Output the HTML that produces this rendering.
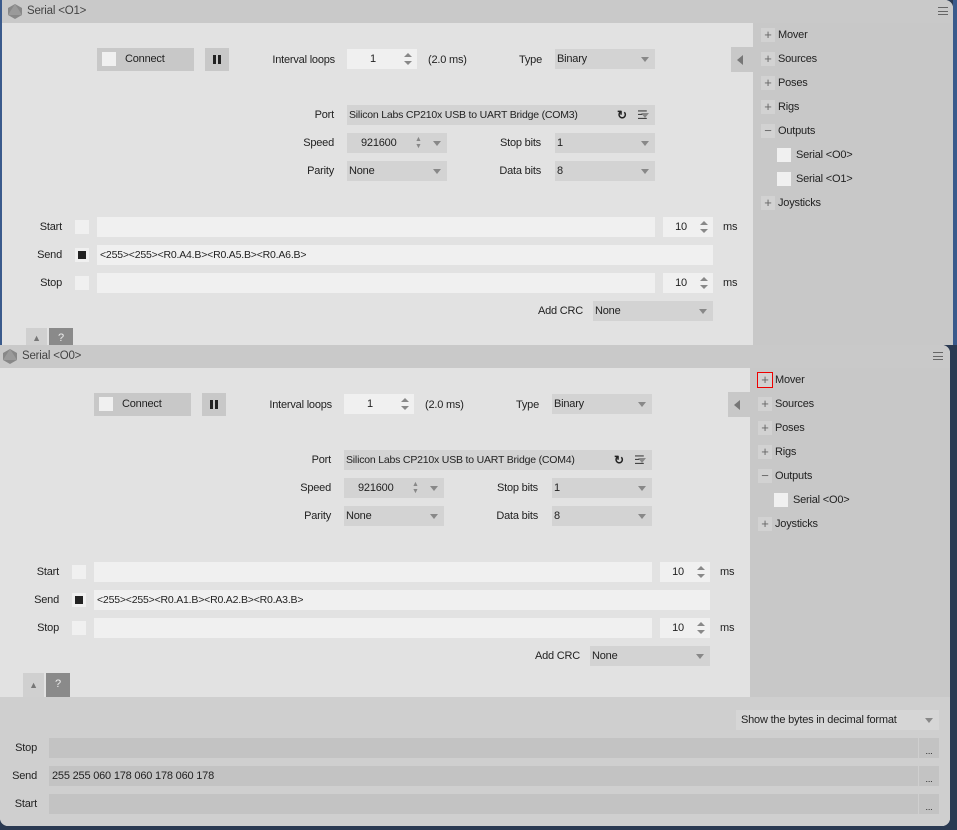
<!DOCTYPE html>
<html><head><meta charset="utf-8"><style>
*{margin:0;padding:0;box-sizing:border-box}
body{width:957px;height:830px;overflow:hidden;background:#2b3a52;font-family:"Liberation Sans",sans-serif;font-size:11px;letter-spacing:-0.2px;color:#222;position:relative}
.a{position:absolute;white-space:nowrap}
.panel{position:absolute;width:953px;background:#e2e2e2;border-radius:0 8px 0 0;overflow:hidden}
.tb{position:absolute;left:0;top:0;right:0;height:23px;background:#c9c9c9}
.tb .t{position:absolute;left:25px;top:5px;color:#444;font-size:11.5px}
.logo{position:absolute;left:5px;top:3px;width:16px;height:17px}
.ham{position:absolute;right:5px;top:7px;width:10px;height:8px;border-top:1px solid #666;border-bottom:1px solid #666}
.ham:after{content:"";position:absolute;left:0;right:0;top:3px;border-top:1px solid #666}
.side{position:absolute;top:23px;width:200px;bottom:0;background:#c8c8c8}
.lbl{position:absolute;text-align:right;line-height:20px;height:20px;white-space:nowrap}
.fld{position:absolute;height:20px;line-height:20px;background:#f0f0f0;padding-left:3px;white-space:nowrap;font-size:10.5px}
.cmb{position:absolute;height:20px;line-height:20px;background:#d3d3d3;padding-left:2px;white-space:nowrap}
.cmb:after{content:"";position:absolute;right:6px;top:8px;border:4px solid transparent;border-top:5px solid #888;border-bottom:0}
.cb{position:absolute;width:14px;height:14px;background:#f0f0f0}
.btn{position:absolute;background:#c8c8c8}
.spin{position:absolute;height:20px;line-height:20px;background:#f0f0f0;text-align:center}
.spin i{position:absolute;right:5px;top:4px;width:0;height:0;border:4px solid transparent;border-bottom:4px solid #888;border-top:0}
.spin b{position:absolute;right:5px;top:12px;width:0;height:0;border:4px solid transparent;border-top:4px solid #888;border-bottom:0}
.tr{position:absolute;height:20px;line-height:20px;white-space:nowrap}
.tr .pm{position:absolute;left:0;top:3px;width:14px;height:14px;background:#d2d2d2;color:#666;text-align:center;line-height:13px;font-size:13px}
.tr .tx{position:absolute;left:17px;top:0;white-space:nowrap}
</style></head><body>
<div class="a" style="left:953px;top:0;width:4px;height:345px;background:#3a5a8c"></div>

<div class="panel" style="left:0;top:0;height:345px;border-left:2px solid #3a5a8c">
<div class="tb"><svg class="logo" viewBox="0 0 16 17"><polygon points="8,1 15,5 15,12 8,16 1,12 1,5" fill="#888"/><polygon points="8,1 15,12 1,12" fill="#9a9a9a"/></svg><span class="t">Serial &lt;O1&gt;</span><div class="ham"></div></div>
<div class="side" style="left:751px"></div>
</div>
<div class="panel" style="left:0;top:345px;width:950px;height:481px;border-radius:0 8px 8px 8px">
<div class="tb"><svg class="logo" viewBox="0 0 16 17" style="left:2px"><polygon points="8,1 15,5 15,12 8,16 1,12 1,5" fill="#888"/><polygon points="8,1 15,12 1,12" fill="#9a9a9a"/></svg><span class="t" style="left:22px">Serial &lt;O0&gt;</span><div class="ham" style="right:7px"></div></div>
<div class="side" style="left:750px"></div>
<div class="a" style="left:0;top:352px;width:950px;height:129px;background:#cfcfcf"></div>
</div>

<div class="a" style="left:0;top:0">
<div class="btn" style="left:97px;top:48px;width:97px;height:23px"><div class="cb" style="left:5px;top:4px"></div><span class="a" style="left:28px;top:5px">Connect</span></div>
<div class="btn" style="left:205px;top:48px;width:24px;height:23px"><div class="a" style="left:8px;top:7px;width:3px;height:9px;background:#222"></div><div class="a" style="left:13px;top:7px;width:3px;height:9px;background:#222"></div></div>
<div class="lbl" style="left:235px;top:50px;width:100px">Interval loops</div>
<div class="spin" style="left:347px;top:49px;width:70px"><span style="margin-left:-18px">1</span><i></i><b></b></div>
<div class="tr" style="left:428px;top:50px">(2.0 ms)</div>
<div class="lbl" style="left:480px;top:50px;width:62px">Type</div>
<div class="cmb" style="left:555px;top:49px;width:100px">Binary</div>
<div class="btn" style="left:731px;top:47px;width:22px;height:25px"><div class="a" style="left:6px;top:8px;border:5px solid transparent;border-right:6px solid #777;border-left:0"></div></div>
<div class="lbl" style="left:280px;top:105px;width:54px">Port</div>
<div class="cmb" style="left:347px;top:105px;width:308px;font-size:10.5px">Silicon Labs CP210x USB to UART Bridge (COM3)<span class="a" style="left:270px;top:0;font-weight:bold;font-size:12px">&#x21BB;</span><span class="a" style="left:290px;top:0;color:#444;font-size:12px">&#9776;</span></div>
<div class="lbl" style="left:280px;top:133px;width:54px">Speed</div>
<div class="cmb" style="left:347px;top:133px;width:100px;padding-left:14px">921600<span class="a" style="left:68px;top:3px;font-size:7px;color:#888;line-height:7px">▲<br>▼</span></div>
<div class="lbl" style="left:470px;top:133px;width:71px">Stop bits</div>
<div class="cmb" style="left:555px;top:133px;width:100px">1</div>
<div class="lbl" style="left:280px;top:161px;width:54px">Parity</div>
<div class="cmb" style="left:347px;top:161px;width:100px">None</div>
<div class="lbl" style="left:470px;top:161px;width:71px">Data bits</div>
<div class="cmb" style="left:555px;top:161px;width:100px">8</div>
<div class="lbl" style="left:10px;top:217px;width:52px">Start</div>
<div class="cb" style="left:75px;top:220px"></div>
<div class="fld" style="left:97px;top:217px;width:558px"></div>
<div class="spin" style="left:663px;top:217px;width:50px"><span style="margin-left:-14px">10</span><i></i><b></b></div>
<div class="tr" style="left:723px;top:217px">ms</div>
<div class="lbl" style="left:10px;top:245px;width:52px">Send</div>
<div class="cb" style="left:75px;top:248px"><div class="a" style="left:3px;top:3px;width:8px;height:8px;background:#222"></div></div>
<div class="fld" style="left:97px;top:245px;width:616px">&lt;255&gt;&lt;255&gt;&lt;R0.A4.B&gt;&lt;R0.A5.B&gt;&lt;R0.A6.B&gt;</div>
<div class="lbl" style="left:10px;top:273px;width:52px">Stop</div>
<div class="cb" style="left:75px;top:276px"></div>
<div class="fld" style="left:97px;top:273px;width:558px"></div>
<div class="spin" style="left:663px;top:273px;width:50px"><span style="margin-left:-14px">10</span><i></i><b></b></div>
<div class="tr" style="left:723px;top:273px">ms</div>
<div class="lbl" style="left:500px;top:301px;width:83px">Add CRC</div>
<div class="cmb" style="left:593px;top:301px;width:120px">None</div>
<div class="btn" style="left:26px;top:328px;width:21px;height:17px;background:#d0d0d0;color:#777;text-align:center;font-size:9px;padding-top:5px">▲</div>
<div class="btn" style="left:49px;top:328px;width:24px;height:17px;background:#8a8a8a;color:#eee;text-align:center;padding-top:4px">?</div>
<div class="tr" style="left:761px;top:25px"><div class="pm">+</div><span class="tx">Mover</span></div>
<div class="tr" style="left:761px;top:49px"><div class="pm">+</div><span class="tx">Sources</span></div>
<div class="tr" style="left:761px;top:73px"><div class="pm">+</div><span class="tx">Poses</span></div>
<div class="tr" style="left:761px;top:97px"><div class="pm">+</div><span class="tx">Rigs</span></div>
<div class="tr" style="left:761px;top:121px"><div class="pm">−</div><span class="tx">Outputs</span></div>
<div class="cb" style="left:777px;top:148px"></div><div class="tr" style="left:796px;top:145px">Serial &lt;O0&gt;</div>
<div class="cb" style="left:777px;top:172px"></div><div class="tr" style="left:796px;top:169px">Serial &lt;O1&gt;</div>
<div class="tr" style="left:761px;top:193px"><div class="pm">+</div><span class="tx">Joysticks</span></div>
</div>

<div class="a" style="left:-3px;top:345px">
<div class="btn" style="left:97px;top:48px;width:97px;height:23px"><div class="cb" style="left:5px;top:4px"></div><span class="a" style="left:28px;top:5px">Connect</span></div>
<div class="btn" style="left:205px;top:48px;width:24px;height:23px"><div class="a" style="left:8px;top:7px;width:3px;height:9px;background:#222"></div><div class="a" style="left:13px;top:7px;width:3px;height:9px;background:#222"></div></div>
<div class="lbl" style="left:235px;top:50px;width:100px">Interval loops</div>
<div class="spin" style="left:347px;top:49px;width:70px"><span style="margin-left:-18px">1</span><i></i><b></b></div>
<div class="tr" style="left:428px;top:50px">(2.0 ms)</div>
<div class="lbl" style="left:480px;top:50px;width:62px">Type</div>
<div class="cmb" style="left:555px;top:49px;width:100px">Binary</div>
<div class="btn" style="left:731px;top:47px;width:22px;height:25px"><div class="a" style="left:6px;top:8px;border:5px solid transparent;border-right:6px solid #777;border-left:0"></div></div>
<div class="lbl" style="left:280px;top:105px;width:54px">Port</div>
<div class="cmb" style="left:347px;top:105px;width:308px;font-size:10.5px">Silicon Labs CP210x USB to UART Bridge (COM4)<span class="a" style="left:270px;top:0;font-weight:bold;font-size:12px">&#x21BB;</span><span class="a" style="left:290px;top:0;color:#444;font-size:12px">&#9776;</span></div>
<div class="lbl" style="left:280px;top:133px;width:54px">Speed</div>
<div class="cmb" style="left:347px;top:133px;width:100px;padding-left:14px">921600<span class="a" style="left:68px;top:3px;font-size:7px;color:#888;line-height:7px">▲<br>▼</span></div>
<div class="lbl" style="left:470px;top:133px;width:71px">Stop bits</div>
<div class="cmb" style="left:555px;top:133px;width:100px">1</div>
<div class="lbl" style="left:280px;top:161px;width:54px">Parity</div>
<div class="cmb" style="left:347px;top:161px;width:100px">None</div>
<div class="lbl" style="left:470px;top:161px;width:71px">Data bits</div>
<div class="cmb" style="left:555px;top:161px;width:100px">8</div>
<div class="lbl" style="left:10px;top:217px;width:52px">Start</div>
<div class="cb" style="left:75px;top:220px"></div>
<div class="fld" style="left:97px;top:217px;width:558px"></div>
<div class="spin" style="left:663px;top:217px;width:50px"><span style="margin-left:-14px">10</span><i></i><b></b></div>
<div class="tr" style="left:723px;top:217px">ms</div>
<div class="lbl" style="left:10px;top:245px;width:52px">Send</div>
<div class="cb" style="left:75px;top:248px"><div class="a" style="left:3px;top:3px;width:8px;height:8px;background:#222"></div></div>
<div class="fld" style="left:97px;top:245px;width:616px">&lt;255&gt;&lt;255&gt;&lt;R0.A1.B&gt;&lt;R0.A2.B&gt;&lt;R0.A3.B&gt;</div>
<div class="lbl" style="left:10px;top:273px;width:52px">Stop</div>
<div class="cb" style="left:75px;top:276px"></div>
<div class="fld" style="left:97px;top:273px;width:558px"></div>
<div class="spin" style="left:663px;top:273px;width:50px"><span style="margin-left:-14px">10</span><i></i><b></b></div>
<div class="tr" style="left:723px;top:273px">ms</div>
<div class="lbl" style="left:500px;top:301px;width:83px">Add CRC</div>
<div class="cmb" style="left:593px;top:301px;width:120px">None</div>
<div class="btn" style="left:26px;top:328px;width:21px;height:24px;background:#d0d0d0;color:#777;text-align:center;font-size:9px;padding-top:7px">▲</div>
<div class="btn" style="left:49px;top:328px;width:24px;height:24px;background:#8a8a8a;color:#eee;text-align:center;padding-top:5px">?</div>
<div class="tr" style="left:761px;top:25px"><div class="pm" style="outline:1px solid #e00">+</div><span class="tx">Mover</span></div>
<div class="tr" style="left:761px;top:49px"><div class="pm">+</div><span class="tx">Sources</span></div>
<div class="tr" style="left:761px;top:73px"><div class="pm">+</div><span class="tx">Poses</span></div>
<div class="tr" style="left:761px;top:97px"><div class="pm">+</div><span class="tx">Rigs</span></div>
<div class="tr" style="left:761px;top:121px"><div class="pm">−</div><span class="tx">Outputs</span></div>
<div class="cb" style="left:777px;top:148px"></div><div class="tr" style="left:796px;top:145px">Serial &lt;O0&gt;</div>
<div class="tr" style="left:761px;top:169px"><div class="pm">+</div><span class="tx">Joysticks</span></div>
</div>

<div class="cmb" style="left:736px;top:710px;width:203px;background:#d6d6d6;padding-left:5px">Show the bytes in decimal format</div>
<div class="lbl" style="left:0;top:738px;width:37px">Stop</div>
<div class="a" style="left:49px;top:738px;width:869px;height:20px;background:#c3c3c3"></div>
<div class="a" style="left:919px;top:738px;width:20px;height:20px;background:#c3c3c3;text-align:center;font-size:9px;line-height:26px">...</div>
<div class="lbl" style="left:0;top:766px;width:37px">Send</div>
<div class="a" style="left:49px;top:766px;width:869px;height:20px;background:#c3c3c3;line-height:20px;padding-left:3px">255 255 060 178 060 178 060 178</div>
<div class="a" style="left:919px;top:766px;width:20px;height:20px;background:#c3c3c3;text-align:center;font-size:9px;line-height:26px">...</div>
<div class="lbl" style="left:0;top:794px;width:37px">Start</div>
<div class="a" style="left:49px;top:794px;width:869px;height:20px;background:#c3c3c3"></div>
<div class="a" style="left:919px;top:794px;width:20px;height:20px;background:#c3c3c3;text-align:center;font-size:9px;line-height:26px">...</div>
</body></html>
